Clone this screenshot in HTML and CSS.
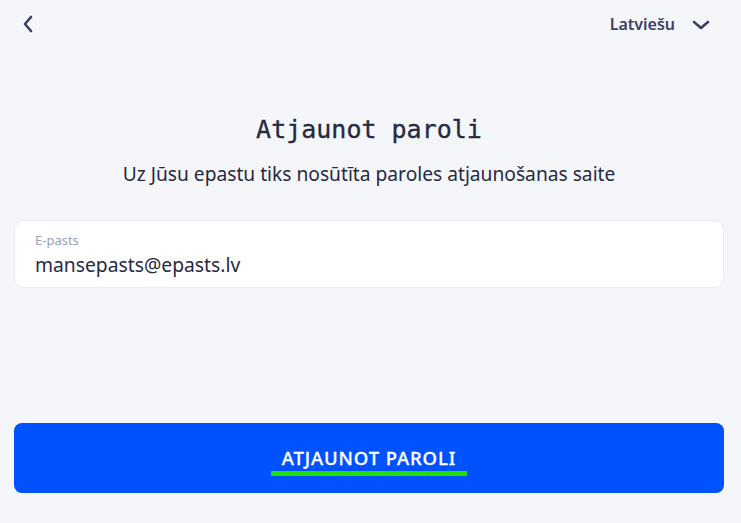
FILE: index.html
```html
<!DOCTYPE html>
<html lang="lv">
<head>
<meta charset="utf-8">
<title>Atjaunot paroli</title>
<link rel="stylesheet" href="styles.css">
</head>
<body>
<div class="page">
  <header class="topbar">
    <button class="back" aria-label="Atpakaļ">
      <svg width="12" height="18" viewBox="0 0 12 18"><path d="M9 2 L3 9 L9 16" fill="none" stroke="#3b3f66" stroke-width="2.6" stroke-linecap="round" stroke-linejoin="round"/></svg>
    </button>
    <button class="lang">
      <span>Latviešu</span>
      <svg width="18" height="12" viewBox="0 0 18 12"><path d="M2 3 L9 9 L16 3" fill="none" stroke="#3b3f66" stroke-width="2.6" stroke-linecap="round" stroke-linejoin="round"/></svg>
    </button>
  </header>

  <main class="content">
    <h1 class="title">Atjaunot paroli</h1>
    <p class="subtitle">Uz Jūsu epastu tiks nosūtīta paroles atjaunošanas saite</p>

    <label class="field">
      <span class="field-label">E-pasts</span>
      <span class="field-value">mansepasts@epasts.lv</span>
    </label>

    <div class="spacer"></div>

    <button class="submit">
      <span class="submit-text">ATJAUNOT PAROLI<span class="mark"></span></span>
    </button>
  </main>
</div>
</body>
</html>
```

FILE: styles.css
```css
* { box-sizing: border-box; }
html, body {
  margin: 0;
  padding: 0;
  background: #f5f6f9;
}
body {
  font-family: "Noto Sans", Roboto, sans-serif;
  color: #262a42;
}
.page {
  width: 741px;
  height: 523px;
  display: flex;
  flex-direction: column;
}
.topbar {
  height: 48px;
  display: flex;
  align-items: center;
  justify-content: space-between;
  padding: 0 31px 0 22px;
}
.back, .lang {
  background: none;
  border: 0;
  padding: 0;
  display: flex;
  align-items: center;
  cursor: pointer;
}
.back svg { display: block; }
.lang {
  gap: 17px;
  font-family: "Noto Sans", sans-serif;
  font-weight: 600;
  font-size: 16px;
  color: #3b3f66;
}
.lang svg { display: block; margin-top: 1px; }
.content {
  flex: 1;
  display: flex;
  flex-direction: column;
  padding: 0 17px 30px 14px;
}
.title {
  margin: 67px 0 0;
  text-align: center;
  font-family: "DejaVu Sans Mono", "Liberation Mono", monospace;
  font-weight: 400;
  font-size: 25px;
  line-height: 30px;
  color: #262a42;
  -webkit-text-stroke: 0.35px #262a42;
}
.subtitle {
  margin: 17px 0 0;
  text-align: center;
  font-size: 19.2px;
  line-height: 24px;
  color: #262a42;
}
.field {
  margin-top: 34px;
  height: 68px;
  background: #ffffff;
  border: 1px solid #e8ecf8;
  border-radius: 10px;
  padding: 11px 20px 0;
  display: flex;
  flex-direction: column;
  gap: 5px;
}
.field-label {
  font-size: 13px;
  line-height: 16px;
  color: #9ba0b6;
}
.field-value {
  font-size: 19.3px;
  line-height: 24px;
  color: #262a42;
}
.spacer { flex: 1; }
.submit {
  height: 70px;
  width: 710px;
  border: 0;
  border-radius: 8px;
  background: #0052ff;
  color: #ffffff;
  display: flex;
  align-items: center;
  justify-content: center;
  cursor: pointer;
  font-family: "Noto Sans", sans-serif;
}
.submit-text {
  position: relative;
  font-size: 18.5px;
  font-weight: 500;
  letter-spacing: 0.9px;
  line-height: 22px;
  margin-top: -1px;
  -webkit-text-stroke: 0.3px #ffffff;
}
.mark {
  position: absolute;
  left: -11px;
  right: -11px;
  top: 24px;
  height: 5px;
  background: #22e000;
}
```
